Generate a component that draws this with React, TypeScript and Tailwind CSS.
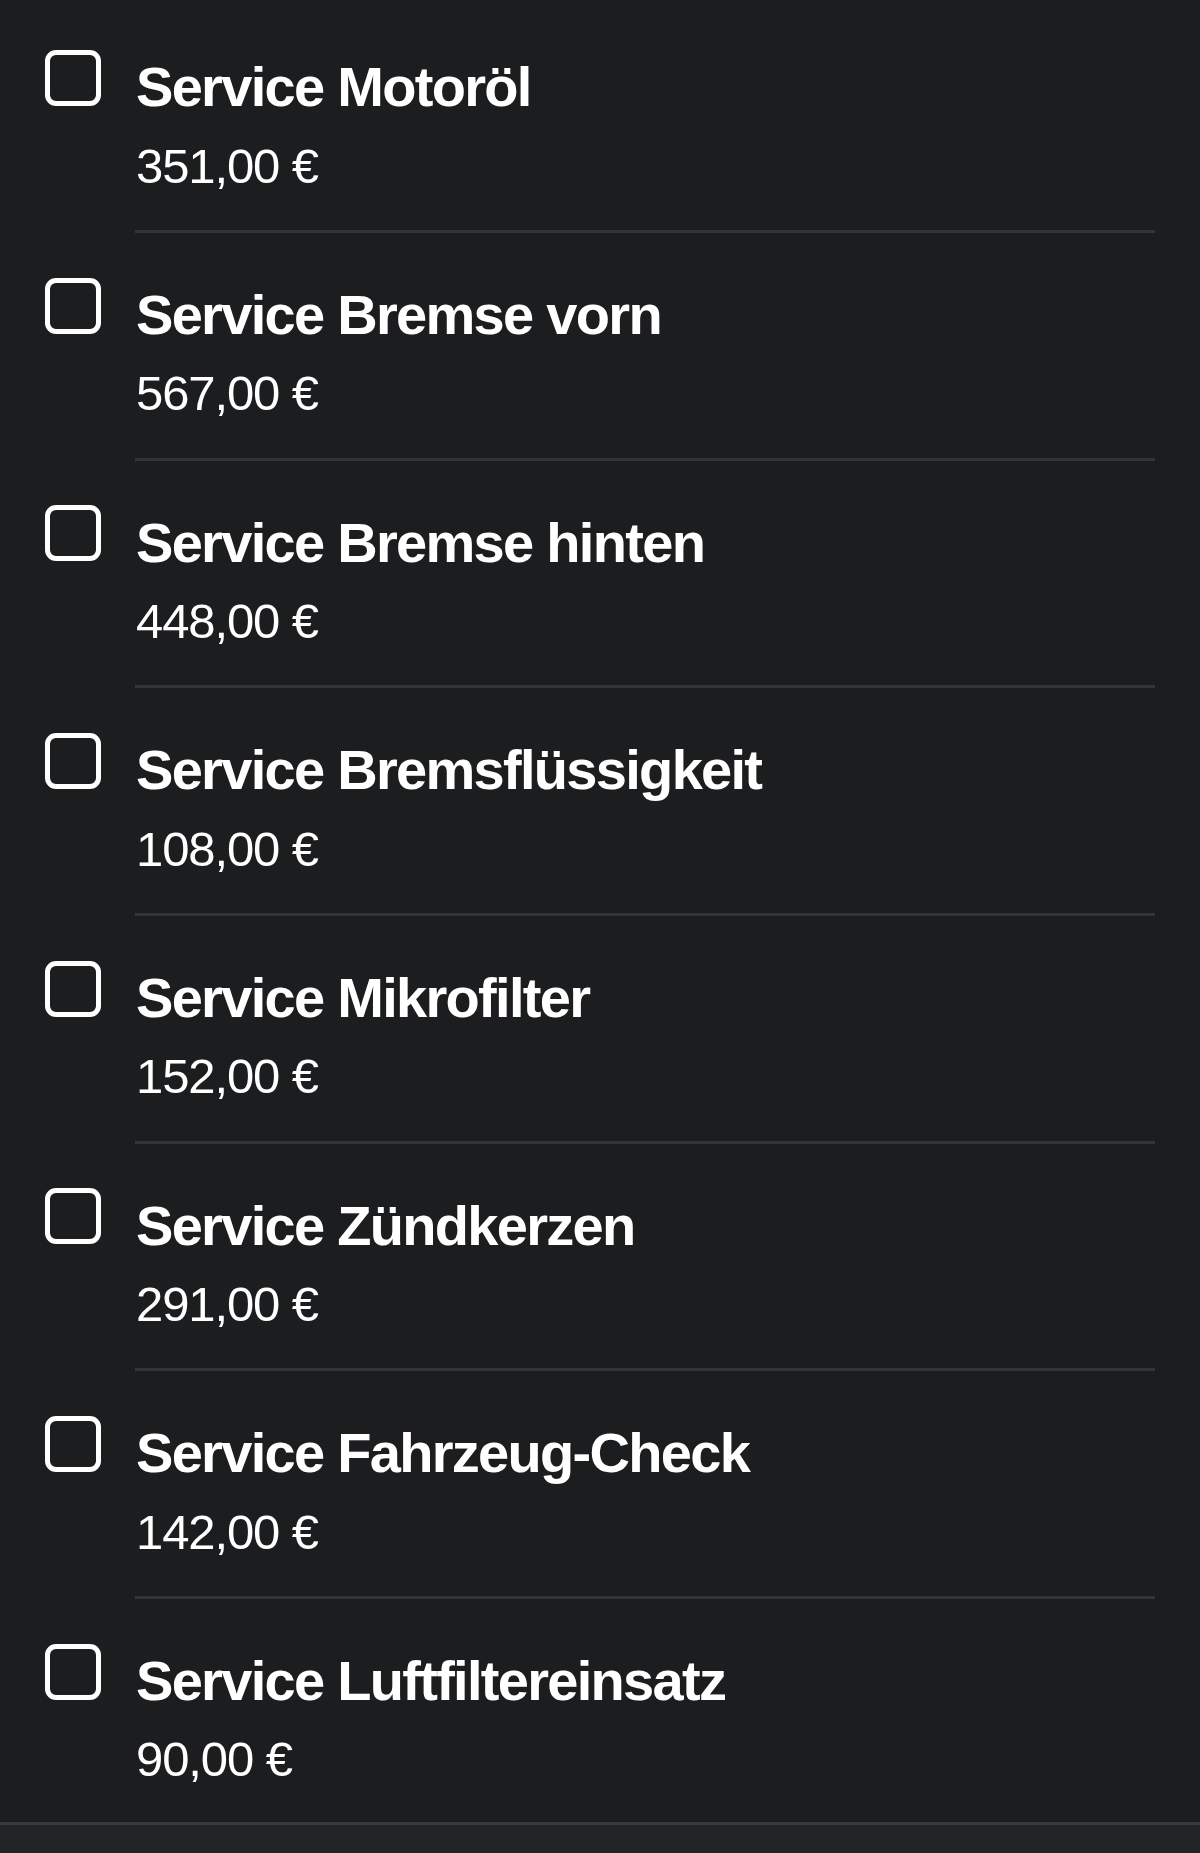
import React from "react";

const items = [
  { title: "Service Motoröl", price: "351,00 €" },
  { title: "Service Bremse vorn", price: "567,00 €" },
  { title: "Service Bremse hinten", price: "448,00 €" },
  { title: "Service Bremsflüssigkeit", price: "108,00 €" },
  { title: "Service Mikrofilter", price: "152,00 €" },
  { title: "Service Zündkerzen", price: "291,00 €" },
  { title: "Service Fahrzeug-Check", price: "142,00 €" },
  { title: "Service Luftfiltereinsatz", price: "90,00 €" },
];

export default function App() {
  return (
    <div
      className="w-[1200px] h-[1853px] bg-[#1c1d1f] text-white overflow-hidden flex flex-col"
      style={{ fontFamily: '"Liberation Sans", Arial, sans-serif' }}
    >
      <div className="pt-[5.33px] flex flex-col">
        {items.map((it, i) => {
          const last = i === items.length - 1;
          return (
            <div key={it.title} className="flex flex-col">
              <div className={`flex flex-row ${last ? "h-[223px]" : "h-[224.67px]"}`}>
                <div className="pl-[45px] pt-[44.67px]">
                  <div className="w-[56px] h-[56px] border-[5px] border-white rounded-[11px]" />
                </div>
                <div className="pl-[35px] pt-[50px] flex flex-col">
                  <div className="text-[56px] leading-[64px] h-[64px] font-bold tracking-[-1.7px] whitespace-nowrap">
                    {it.title}
                  </div>
                  <div className="mt-[18.4px] text-[49px] leading-[56px] h-[56px] font-normal tracking-[-1.1px] whitespace-nowrap">
                    {it.price}
                  </div>
                </div>
              </div>
              {!last && <div className="ml-[135px] mr-[45px] h-[3px] bg-[#333436]" />}
            </div>
          );
        })}
      </div>
      <div className="border-t-[3px] border-[#393a3c] bg-[#232426] flex-1" />
    </div>
  );
}
